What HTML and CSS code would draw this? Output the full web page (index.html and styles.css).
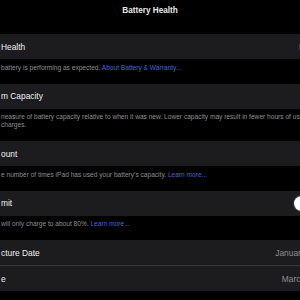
FILE: index.html
```html
<!DOCTYPE html>
<html lang="en">
<head>
<meta charset="utf-8">
<title>Battery Health</title>
<link rel="stylesheet" href="styles.css">
</head>
<body>
<div class="screen">
  <header class="nav"><h1 class="nav-title">Battery Health</h1></header>

  <section class="group">
    <div class="cell"><span class="label">Health</span><span class="value">Normal</span></div>
  </section>
  <p class="footnote">battery is performing as expected. <a class="link">About Battery &amp; Warranty...</a></p>

  <section class="group">
    <div class="cell"><span class="label">m Capacity</span><span class="value">99%</span></div>
  </section>
  <p class="footnote">neasure of battery capacity relative to when it was new. Lower capacity may result in fewer hours of usage between<br>charges.</p>

  <section class="group">
    <div class="cell"><span class="label">ount</span><span class="value">12</span></div>
  </section>
  <p class="footnote">e number of times iPad has used your battery’s capacity. <a class="link">Learn more...</a></p>

  <section class="group">
    <div class="cell"><span class="label">mit</span><span class="switch"><span class="switch-knob"></span></span></div>
  </section>
  <p class="footnote"> will only charge to about 80%. <a class="link">Learn more...</a></p>

  <section class="group">
    <div class="cell"><span class="label">cture Date</span><span class="value">January 2024</span></div>
    <div class="cell"><span class="label">e</span><span class="value">March 2024</span></div>
  </section>
</div>
</body>
</html>
```

FILE: styles.css
```css
html, body {
  margin: 0;
  padding: 0;
  background: #000;
}

body {
  font-family: "Liberation Sans", Arial, sans-serif;
  color: #fff;
  overflow: hidden;
}

.screen {
  width: 300px;
  height: 300px;
  overflow: hidden;
  background: #000;
}

.nav {
  height: 34px;
  display: flex;
  justify-content: center;
  align-items: flex-start;
  padding-top: 6px;
  box-sizing: border-box;
}

.nav-title {
  margin: 0;
  font-size: 8.2px;
  line-height: 10px;
  font-weight: 700;
  color: #e8e8e8;
}

.group {
  background: #1c1c1e;
}

.cell {
  display: flex;
  align-items: center;
  height: 25px;
  padding-left: 1px;
  font-size: 8.4px;
  white-space: nowrap;
}

.cell + .cell {
  border-top: 1px solid #38383a;
}

.label {
  color: #f0f0f0;
}

.value {
  margin-left: auto;
  margin-right: -26px;
  color: #8e8e93;
}

.switch {
  margin-left: auto;
  margin-right: -22px;
  width: 29px;
  height: 17px;
  border-radius: 9px;
  background: #39393d;
  display: flex;
  align-items: center;
  padding: 0 1px;
  box-sizing: border-box;
}

.switch-knob {
  width: 15px;
  height: 15px;
  border-radius: 50%;
  background: #fff;
}

.footnote {
  margin: 0;
  padding: 4.5px 0 12px 1px;
  font-size: 6.6px;
  line-height: 8px;
  color: #8e8e93;
  white-space: nowrap;
}

.link {
  color: #4169d0;
}
```
